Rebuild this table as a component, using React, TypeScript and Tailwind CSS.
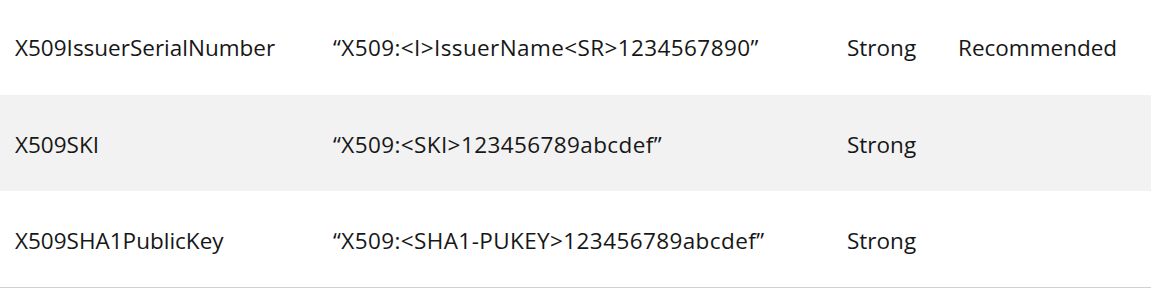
const rows = [
  {
    name: "X509IssuerSerialNumber",
    value: "\u201CX509:<I>IssuerName<SR>1234567890\u201D",
    strength: "Strong",
    note: "Recommended",
  },
  {
    name: "X509SKI",
    value: "\u201CX509:<SKI>123456789abcdef\u201D",
    strength: "Strong",
    note: "",
  },
  {
    name: "X509SHA1PublicKey",
    value: "\u201CX509:<SHA1-PUKEY>123456789abcdef\u201D",
    strength: "Strong",
    note: "",
  },
];

export default function App() {
  return (
    <div className="w-[1151px] bg-white text-[#171717] font-['Open_Sans',sans-serif] text-[22.5px]">
      <div className="border-b border-[#d1d1d1]">
        {rows.map((row, i) => (
          <div
            key={row.name}
            className={`grid grid-cols-[318px_514px_111px_1fr] items-center ${
              i === 0 ? "h-[95px]" : "h-[96px] pt-[3px]"
            } ${i % 2 === 1 ? "bg-[#f2f2f2]" : "bg-white"}`}
          >
            <div className="pl-[15px]">{row.name}</div>
            <div className="pl-[15px] whitespace-nowrap tracking-[0.4px]">{row.value}</div>
            <div className="pl-[15px]">{row.strength}</div>
            <div className="pl-[15px]">{row.note}</div>
          </div>
        ))}
      </div>
    </div>
  );
}
